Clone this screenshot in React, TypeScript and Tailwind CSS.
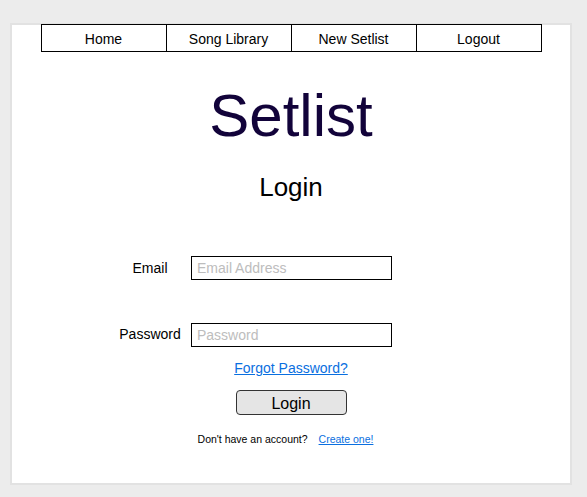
import { memo } from "react";

const navItems = ["Home", "Song Library", "New Setlist", "Logout"];

function App() {
  return (
    <div
      className="min-h-[497px] w-full bg-[#ececec] pt-[23px] pl-[10px]"
      style={{ fontFamily: '"Liberation Sans", Arial, sans-serif' }}
    >
      <div className="flex h-[462px] w-[562px] flex-col items-center border-2 border-[#e2e2e2] bg-white">
        <nav className="-mt-px flex h-[28px] w-[501px] border border-black">
          {navItems.map((item, i) => (
            <a
              key={item}
              href="#"
              className={
                i < navItems.length - 1
                  ? "flex w-[125px] items-center justify-center border-r border-black pt-[2px] text-[14px] text-black"
                  : "flex w-[124px] items-center justify-center pt-[2px] text-[14px] text-black"
              }
            >
              {item}
            </a>
          ))}
        </nav>

        <h1 className="mt-[34px] text-[60px] leading-none text-[#12033a]">
          Setlist
        </h1>
        <h2 className="mt-[28px] text-[26px] leading-[26px] text-black">
          Login
        </h2>

        <form className="mt-[56px] flex w-full flex-col items-center">
          <div className="flex w-full items-center pl-[98px]">
            <label className="w-[80px] pt-px text-center text-[14px] text-black">
              Email
            </label>
            <input
              type="email"
              placeholder="Email Address"
              className="ml-px h-[24px] w-[201px] border border-black px-[5px] text-[14px] text-black outline-none placeholder:text-[#bdbdbd]"
            />
          </div>
          <div className="mt-[43px] flex w-full items-center pl-[98px]">
            <label className="w-[80px] pb-[2px] text-center text-[14px] text-black">
              Password
            </label>
            <input
              type="password"
              placeholder="Password"
              className="ml-px h-[24px] w-[201px] border border-black px-[5px] text-[14px] text-black outline-none placeholder:text-[#bdbdbd]"
            />
          </div>

          <a
            href="#"
            className="mt-[13px] text-[14px] leading-[16px] text-[#0a6fe0] underline"
          >
            Forgot Password?
          </a>

          <button
            type="button"
            className="mt-[14px] h-[25px] w-[111px] rounded-[4px] border border-[#333] bg-[#e5e5e5] pt-[2px] text-[16px] leading-none text-black"
          >
            Login
          </button>

          <p className="mt-[18px] pr-[11px] text-[10.5px] leading-[12px] text-black">
            Don't have an account?
            <a href="#" className="ml-[11px] text-[#0a6fe0] underline">
              Create one!
            </a>
          </p>
        </form>
      </div>
    </div>
  );
}

export default memo(App);
